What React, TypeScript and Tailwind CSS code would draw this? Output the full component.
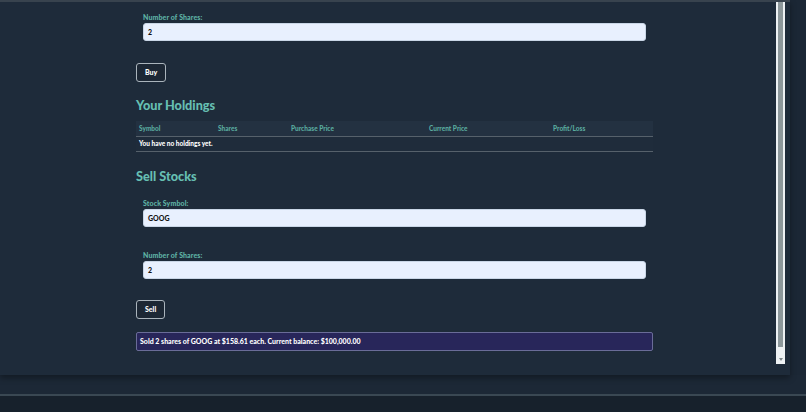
import React from "react";

const font = { fontFamily: "Lato, 'Open Sans', sans-serif" };

function Field({ label, value }: { label: string; value: string }) {
  return (
    <div className="px-[7px]">
      <div className="text-[7px] font-black leading-[10px] tracking-[0.1px] text-[#5fb3a6]">{label}</div>
      <div className="mt-[1px] h-[18px] w-full rounded-[3px] border border-[#c9d6e6] bg-[#e8f0fe] px-[4px] text-[7px] font-black leading-[16px] text-[#111]">
        {value}
      </div>
    </div>
  );
}

function Btn({ children }: { children: React.ReactNode }) {
  return (
    <div className="flex h-[19px] items-center rounded-[3px] border border-[#aab4bc] bg-[#1c2734] px-[8px] text-[7px] font-black text-white">
      {children}
    </div>
  );
}

export default function App() {
  return (
    <div className="relative flex h-[412px] w-[806px] flex-col overflow-hidden bg-[#1b2735]" style={font}>
      <div className="relative h-[375px] w-[790px] border-t-2 border-[#38434e] bg-[#1e2b3a] shadow-[0_3px_6px_rgba(0,0,0,0.35)]">
        <div className="ml-[136px] w-[517px] pt-[10px]">
          <Field label="Number of Shares:" value="2" />
          <div className="mt-[22px] flex">
            <Btn>Buy</Btn>
          </div>
          <div className="mt-[15px] text-[12.7px] font-black leading-[16px] text-[#66bfb2]">Your Holdings</div>
          <div className="mt-[8px]">
            <div className="grid h-[16px] grid-cols-[79px_73px_138px_124px_1fr] items-center border-b border-[#56616b] bg-[#233141] px-[3px] text-[6.5px] font-black text-[#5aab9f]">
              <div>Symbol</div>
              <div>Shares</div>
              <div>Purchase Price</div>
              <div>Current Price</div>
              <div>Profit/Loss</div>
            </div>
            <div className="flex h-[15px] items-center border-b border-[#56616b] bg-[#1f2c3b] px-[3px] text-[6.5px] font-black text-white">
              You have no holdings yet.
            </div>
          </div>
          <div className="mt-[16px] text-[12.7px] font-black leading-[16px] text-[#66bfb2]">Sell Stocks</div>
          <div className="mt-[14px]">
            <Field label="Stock Symbol:" value="GOOG" />
          </div>
          <div className="mt-[23px]">
            <Field label="Number of Shares:" value="2" />
          </div>
          <div className="mt-[21px] flex">
            <Btn>Sell</Btn>
          </div>
          <div className="mt-[13px] flex h-[19px] items-center rounded-[2px] border border-[#6a6c98] bg-[#28265a] px-[3px] text-[7px] font-black text-white">
            Sold 2 shares of GOOG at $158.61 each. Current balance: $100,000.00
          </div>
        </div>
        {/* scrollbar */}
        <div className="absolute left-[776px] top-0 flex h-[362px] w-[9px] flex-col bg-[#eef2f4] px-[2px]">
          <div className="h-[345px] w-full bg-[#8d989b]" />
          <div className="flex flex-1 items-end justify-center pb-[3px]">
            <div className="h-0 w-0 border-l-[2.5px] border-r-[2.5px] border-t-[3px] border-l-transparent border-r-transparent border-t-[#7d878a]" />
          </div>
        </div>
      </div>
      <div className="h-[19px] bg-[#1c2836]" />
      <div className="h-[2px] bg-[#3a4853]" />
      <div className="flex-1 bg-[#17212c]" />
    </div>
  );
}
